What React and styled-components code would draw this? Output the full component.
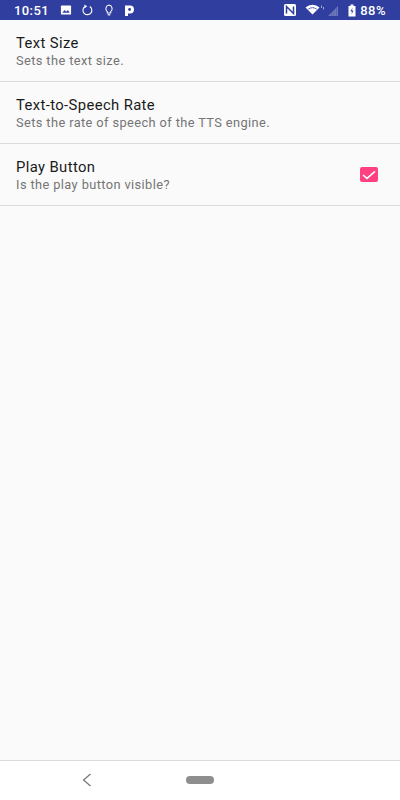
import React from "react";
import styled, { createGlobalStyle } from "styled-components";

const Global = createGlobalStyle`
  html, body { margin: 0; padding: 0; height: 800px; background: #fafafa; }
  #root { height: 800px; }
  * { box-sizing: border-box; }
`;
const Screen = styled.div`
  width: 400px; height: 800px; display: flex; flex-direction: column;
  background: #fafafa; overflow: hidden; font-family: Roboto, "Noto Sans", sans-serif;
`;
const StatusBar = styled.div`
  height: 20px; flex: none; background: #303f9f; color: #fff; display: flex; align-items: center;
  padding: 0 14px 0 14px; font-size: 13px; letter-spacing: 0.4px;
`;
const Time = styled.span`font-weight: 500; width: 46px;`;
const Group = styled.div`display: flex; align-items: center; gap: ${p => p.$gap}px;`;
const Spacer = styled.div`flex: 1;`;
const Battery = styled.span`font-weight: 500; margin-left: 4px; letter-spacing: 0.5px;`;
const List = styled.div`flex: 1;`;
const Row = styled.div`
  height: 62px; padding: 14px 22px 0 16px; border-bottom: 1px solid #dcdcdc; display: flex; justify-content: space-between;
`;
const Texts = styled.div`display: flex; flex-direction: column;`;
const Title = styled.div`font-size: 14.8px; line-height: 19px; color: #1a1a1a; letter-spacing: 0.39px;`;
const Sub = styled.div`font-size: 12.8px; line-height: 15px; color: #757575; letter-spacing: 0.4px;`;
const Check = styled.div`
  width: 18px; height: 15px; margin-top: 9px; border-radius: 2px; background: #ff4081;
  display: flex; align-items: center; justify-content: center;
`;
const NavBar = styled.div`
  height: 40px; flex: none; background: #fff; border-top: 1px solid #dcdcdc; display: flex; align-items: center;
  padding: 0 0 0 82px;
`;
const Back = styled.svg`width: 10px; height: 16px; flex: none; margin-top: -2px;`;
const Pill = styled.div`width: 28px; height: 8px; border-radius: 4px; background: #8e8e8e; margin: -1px 0 0 94px;`;

const I = ({ w = 14, h = 14, vb = "0 0 14 14", children }) => (
  <svg width={w} height={h} viewBox={vb} fill="none">{children}</svg>
);

export default function App() {
  return (
    <Screen>
      <Global />
      <StatusBar>
        <Time>10:51</Time>
        <Group $gap={9}>
          <I w={12} h={12} vb="0 0 13 12">
            <rect x="1" y="1" width="11" height="10" rx="1" fill="#fff" />
            <path d="M2.5 9 L5 6 L6.8 7.8 L8.5 6 L10.5 9Z" fill="#303f9f" />
          </I>
          <I w={13} h={14} vb="0 0 14 14">
            <path d="M4 3.4 A4.8 4.8 0 1 0 9.5 3.2" stroke="#fff" strokeWidth="1.2" />
            <path d="M3.6 1.2 L6.6 3 L3.8 5.4Z" fill="#fff" />
          </I>
          <I w={12} h={14} vb="0 0 14 14">
            <path d="M7 1.2 A4.4 4.4 0 0 0 5 9 V10.5 H9 V9 A4.4 4.4 0 0 0 7 1.2Z" stroke="#fff" strokeWidth="1.2" />
            <path d="M5.5 12.6 H8.5" stroke="#fff" strokeWidth="1.4" />
          </I>
          <I w={11} h={13} vb="0 0 11 13">
            <path d="M1 12 V1.5 H6 A4 4 0 0 1 6 9.5 H4 V12Z" fill="#fff" />
            <circle cx="5.6" cy="5.5" r="1.4" fill="#303f9f" />
          </I>
        </Group>
        <Spacer />
        <Group $gap={8}>
          <I vb="0 0 14 14">
            <rect x="1" y="1" width="12" height="12" rx="1.5" fill="#fff" />
            <path d="M3.5 10.5 V3.5 L10.5 10.5 V3.5" stroke="#303f9f" strokeWidth="1.5" />
          </I>
          <Group $gap={1}>
            <I w={20} h={12} vb="0 0 20 12">
              <path d="M0.5 3.6 A10 10 0 0 1 14.5 3.6 L7.5 10.5Z" fill="#fff" />
              <path d="M3.3 5.2 A7 7 0 0 1 11.7 5.2" stroke="#303f9f" strokeWidth=".8" />
              <path d="M16.5 1.5 V4 M18.5 3 V5.5" stroke="#fff" strokeWidth=".8" opacity=".7" />
            </I>
            <I w={14} h={13} vb="0 0 14 13">
              <path d="M2 12 L12 2 V12Z" fill="#fff" opacity=".3" />
              <path d="M5.5 12 V8.5 M8 12 V6 M10.5 12 V3.5" stroke="#303f9f" strokeWidth=".7" opacity=".5" />
            </I>
          </Group>
          <I w={8} h={13} vb="0 0 8 13">
            <path d="M2.5 0.5 H5.5 V2 H7.5 V12.5 H0.5 V2 H2.5Z" fill="#fff" />
            <path d="M4.5 3.5 L2.5 7.5 H4 L3.5 10.5 L5.5 6.5 H4Z" fill="#303f9f" />
          </I>
        </Group>
        <Battery>88%</Battery>
      </StatusBar>
      <List>
        <Row><Texts><Title>Text Size</Title><Sub>Sets the text size.</Sub></Texts></Row>
        <Row><Texts><Title>Text-to-Speech Rate</Title><Sub>Sets the rate of speech of the TTS engine.</Sub></Texts></Row>
        <Row>
          <Texts><Title>Play Button</Title><Sub>Is the play button visible?</Sub></Texts>
          <Check>
            <svg width="14" height="10" viewBox="0 0 14 10" fill="none">
              <path d="M1 5 L5 8.4 L13 1.4" stroke="#fff" strokeWidth="1.6" />
            </svg>
          </Check>
        </Row>
      </List>
      <NavBar>
        <Back viewBox="0 0 10 16" fill="none"><path d="M8.5 2 L1.5 8 L8.5 14" stroke="#757575" strokeWidth="1.2" /></Back>
        <Pill />
      </NavBar>
    </Screen>
  );
}
